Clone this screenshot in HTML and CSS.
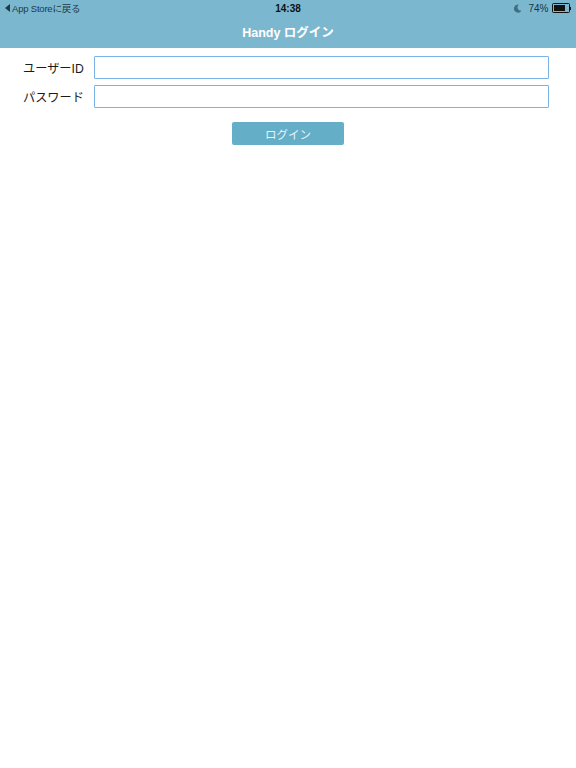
FILE: index.html
```html
<!DOCTYPE html>
<html lang="ja">
<head>
    <meta charset="UTF-8">
    <meta name="viewport" content="width=device-width, initial-scale=1.0">
    <title>Handy ログイン</title>
    <link rel="stylesheet" href="styles.css">
</head>
<body>
    <div class="header">
        <div class="status-bar">
            <div class="status-left">
                <span class="back-arrow"></span>
                <span>App Storeに戻る</span>
            </div>
            <div class="status-time">14:38</div>
            <div class="status-right">
                <svg class="moon" width="9" height="9" viewBox="0 0 10 10">
                    <path d="M6.5 0.8 A4.4 4.4 0 1 0 9.4 7.2 A3.6 3.6 0 0 1 6.5 0.8 Z" fill="#3f6f82"/>
                </svg>
                <span>74%</span>
                <span class="battery"><span class="battery-level"></span></span>
                <span class="battery-tip"></span>
            </div>
        </div>
        <div class="title">Handy ログイン</div>
    </div>

    <form class="login-form">
        <div class="form-row">
            <label for="user-id">ユーザーID</label>
            <input type="text" id="user-id">
        </div>
        <div class="form-row">
            <label for="password">パスワード</label>
            <input type="password" id="password">
        </div>
        <div class="actions">
            <button type="button" id="login">ログイン</button>
        </div>
    </form>
</body>
</html>
```

FILE: styles.css
```css
body {
    margin: 0;
    padding: 0;
    font-family: "Liberation Sans", "Noto Sans CJK JP", sans-serif;
    background: #ffffff;
    color: #1a1a1a;
}
.header {
    background-color: #7bb8cf;
    height: 48px;
    display: flex;
    flex-direction: column;
}
.status-bar {
    height: 16px;
    display: flex;
    justify-content: space-between;
    align-items: center;
    padding: 0 5px 0 5px;
    font-size: 9.5px;
    color: #1e3a46;
    position: relative;
}
.status-left {
    display: flex;
    align-items: center;
    gap: 2px;
}
.status-left span:last-child {
    letter-spacing: -0.2px;
}
.back-arrow {
    width: 0;
    height: 0;
    border-top: 4px solid transparent;
    border-bottom: 4px solid transparent;
    border-right: 5px solid #1e3a46;
}
.status-time {
    position: absolute;
    left: 0;
    right: 0;
    text-align: center;
    font-weight: bold;
    font-size: 10px;
    color: #111;
}
.status-right {
    display: flex;
    align-items: center;
    gap: 2px;
    font-size: 10px;
    color: #1b3440;
}
.moon {
    margin-right: 4px;
}
.battery {
    width: 14px;
    height: 6px;
    border: 1px solid #111;
    border-radius: 1.5px;
    padding: 1px;
    display: flex;
    margin-left: 1px;
}
.battery-level {
    width: 80%;
    background: #111;
}
.battery-tip {
    width: 1.5px;
    height: 3px;
    background: #111;
    margin-left: -2px;
}
.title {
    flex: 1;
    display: flex;
    justify-content: center;
    align-items: center;
    color: #ffffff;
    font-weight: bold;
    font-size: 12.5px;
    padding-bottom: 2px;
}
.login-form {
    display: flex;
    flex-direction: column;
    gap: 6px;
    padding-top: 8px;
}
.form-row {
    display: flex;
    align-items: center;
    padding: 0 27px 0 23px;
}
.form-row label {
    width: 71px;
    flex-shrink: 0;
    font-size: 12.2px;
    color: #1a1a1a;
}
.form-row input {
    flex: 1;
    height: 23px;
    box-sizing: border-box;
    border: 1px solid #7ab4e6;
    border-radius: 1px;
    padding: 0 4px;
    font-size: 13px;
    outline: none;
}
.actions {
    display: flex;
    justify-content: center;
    margin-top: 8px;
}
.actions button {
    width: 112px;
    height: 23px;
    background-color: #64aec8;
    color: #eaf4f8;
    border: none;
    border-radius: 2px;
    font-size: 11.5px;
    font-family: "Liberation Sans", "Noto Sans CJK JP", sans-serif;
    padding: 0;
}
```
